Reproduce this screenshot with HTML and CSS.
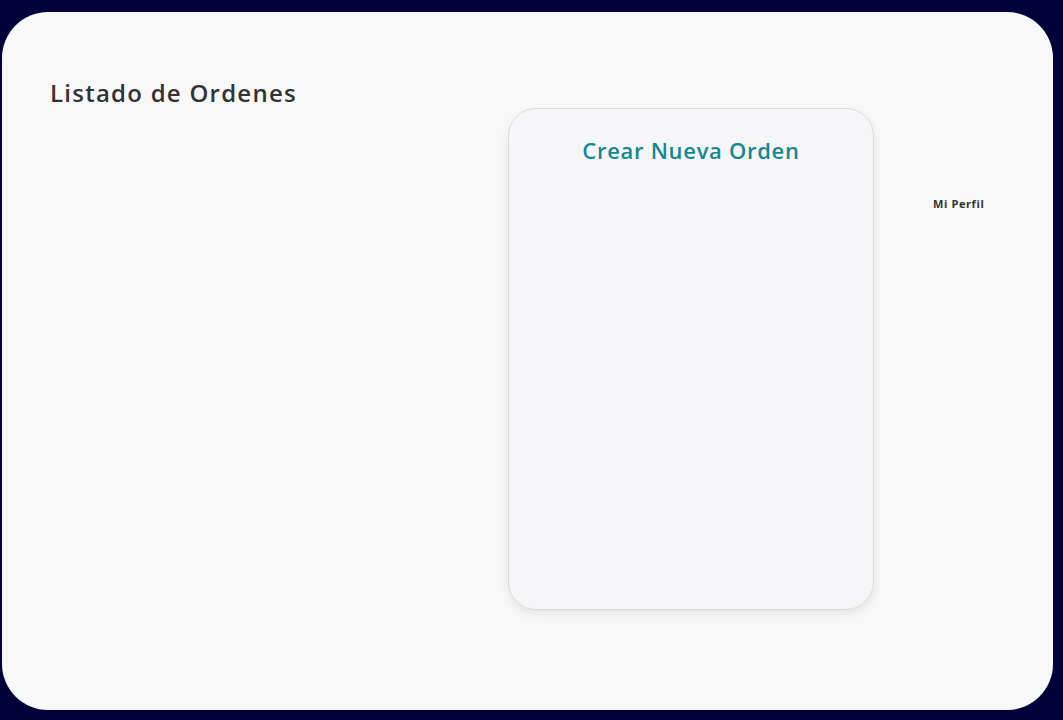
FILE: index.html
```html
<!DOCTYPE html>
<html lang="es">
<head>
<meta charset="utf-8">
<title>Listado de Ordenes</title>
<link rel="stylesheet" href="styles.css">
</head>
<body>
  <main class="panel">
    <section class="list-col">
      <h1 class="page-title">Listado de Ordenes</h1>
    </section>
    <section class="card">
      <h2 class="card-title">Crear Nueva Orden</h2>
    </section>
    <nav class="profile">
      <a class="profile-link" href="#">Mi Perfil</a>
    </nav>
  </main>
</body>
</html>
```

FILE: styles.css
```css
* { box-sizing: border-box; }

html, body {
  height: 100%;
}

body {
  margin: 0;
  padding: 12px 10px 10px 2px;
  background: #02023a;
  font-family: "Open Sans", "Noto Sans", sans-serif;
}

.panel {
  height: 100%;
  background: #f8f8f8;
  border-radius: 46px;
  display: flex;
  align-items: flex-start;
  padding-left: 48px;
}

.list-col {
  width: 458px;
  flex: none;
}

.page-title {
  margin: 64px 0 0;
  font-size: 24px;
  font-weight: 600;
  line-height: 34px;
  color: #333333;
  letter-spacing: 1.25px;
}

.card {
  flex: none;
  width: 366px;
  height: 502px;
  margin-top: 96px;
  background: #f6f6f8;
  border: 1px solid #dcdcdc;
  border-radius: 28px;
  box-shadow: 0 4px 10px rgba(0, 0, 0, 0.08);
  padding-top: 26px;
}

.card-title {
  margin: 0;
  text-align: center;
  font-size: 22px;
  font-weight: 600;
  line-height: 30px;
  color: #138891;
  letter-spacing: 0.7px;
}

.profile {
  margin: 179px 0 0 59px;
}

.profile-link {
  font-size: 11px;
  font-weight: 700;
  color: #333333;
  text-decoration: none;
  letter-spacing: 0.6px;
}
```
